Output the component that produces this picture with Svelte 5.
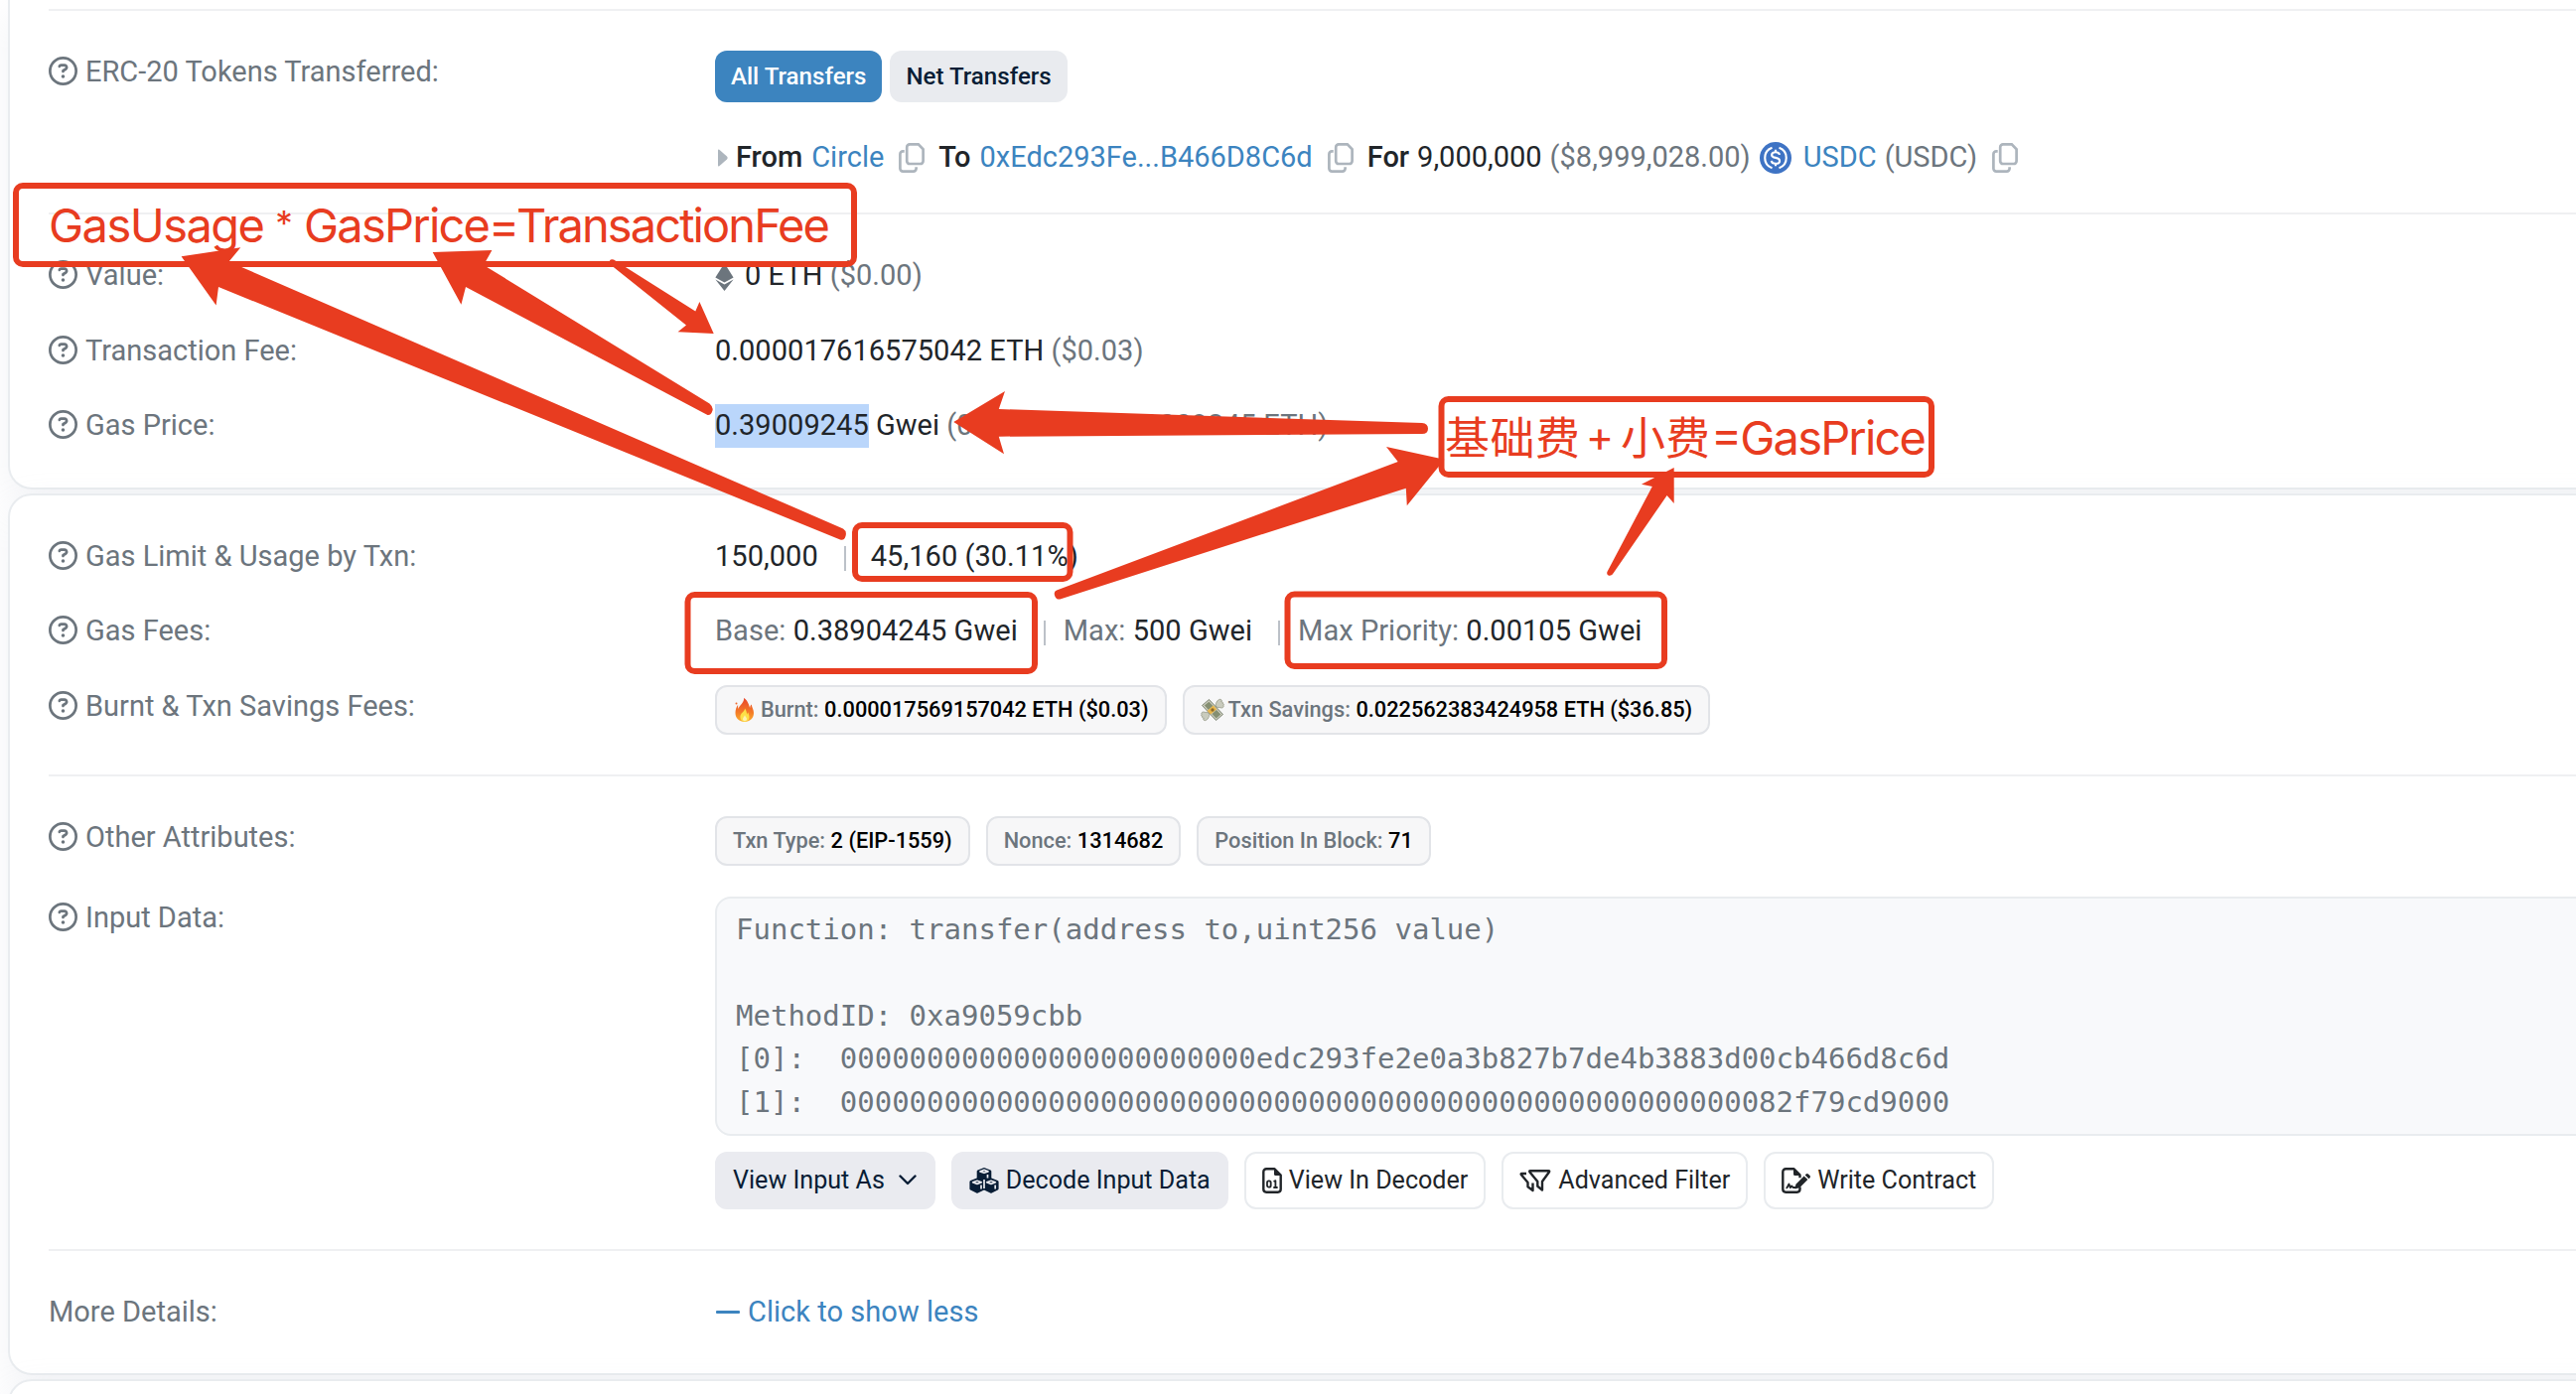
<script lang="ts">
	// Transaction details page with hand-drawn fee annotations on top.

	const otherBadges = [
		{ label: 'Txn Type:', value: '2 (EIP-1559)' },
		{ label: 'Nonce:', value: '1314682' },
		{ label: 'Position In Block:', value: '71' }
	];

	const inputData = [
		'Function: transfer(address to,uint256 value)',
		'',
		'MethodID: 0xa9059cbb',
		'[0]:  000000000000000000000000edc293fe2e0a3b827b7de4b3883d00cb466d8c6d',
		'[1]:  0000000000000000000000000000000000000000000000000000082f79cd9000'
	].join('\n');

	const boxes = [
		{ x: 16, y: 187, w: 844, h: 79 },
		{ x: 1451.5, y: 402, w: 493.5, h: 76 },
		{ x: 861, y: 529, w: 216.5, h: 54 },
		{ x: 692.5, y: 599, w: 349.5, h: 77 },
		{ x: 1296.5, y: 598.5, w: 379.5, h: 72.5 }
	];

	const arrows = [
		'M182.6 258.3 242.3 249.3 230.5 263.5 849 532.5Q853 535 851.5 540 850 545 846 543.5L220 289 217.6 307.5Z',
		'M435.7 254 495.4 252 487 267 714.5 406.5Q718.5 410 717.5 413.5 716 418.5 712.5 418L469 289 464.4 306.7Z',
		'M618 261.5 700.3 313.5 704.4 304 718.7 336 682.6 334.3 691 327.5 614 266Q612.5 260.5 618 261.5Z',
		'M960.3 425 1012 394 1005.8 412 1432 426Q1438 426.5 1438 431.7 1438 437 1432 437L1005.8 439.7 1011 457.3Z',
		'M1064 594.5 1407.7 465 1396 450 1454.5 462.7 1416.8 509.3 1415.8 491.7 1069 603Q1064 605 1062.3 600.5 1060.5 596 1064 594.5Z',
		'M1618.4 576 1663.8 490 1653 487.7 1685.7 471 1685.7 507 1678.6 499 1624.8 577Q1623 580.5 1620 579.7 1617.5 578.5 1618.4 576Z'
	];
</script>

{#snippet label(text: string)}
	<div class="label">
		<svg class="help" viewBox="0 0 512 512">
			<path
				d="M464 256A208 208 0 1 0 48 256a208 208 0 1 0 416 0zM0 256a256 256 0 1 1 512 0A256 256 0 1 1 0 256zm169.8-90.7c7.9-22.3 29.1-37.3 52.8-37.3h58.3c34.9 0 63.1 28.3 63.1 63.1c0 22.6-12.1 43.5-31.7 54.8L280 264.4c-.2 13-10.9 23.6-24 23.6c-13.3 0-24-10.7-24-24V250.5c0-8.6 4.6-16.5 12.1-20.8l44.3-25.4c4.7-2.7 7.6-7.7 7.6-13.1c0-8.4-6.8-15.1-15.1-15.1H222.6c-3.4 0-6.4 2.1-7.5 5.3l-.4 1.2c-4.4 12.5-18.2 19-30.7 14.6s-19-18.2-14.6-30.7zM224 352a32 32 0 1 1 64 0 32 32 0 1 1 -64 0z"
			/>
		</svg>
		<span>{text}</span>
	</div>
{/snippet}

{#snippet copy()}
	<svg class="copy" viewBox="0 0 26 30">
		<path d="M11 1.4h8.8l4.8 5v11.8a2.8 2.8 0 0 1-2.8 2.8H11a2.8 2.8 0 0 1-2.8-2.8V4.2A2.8 2.8 0 0 1 11 1.4z" />
		<path d="M5.7 8.4H4.2a2.8 2.8 0 0 0-2.8 2.8v14.6a2.8 2.8 0 0 0 2.8 2.8h10.6a2.8 2.8 0 0 0 2.8-2.8v-1.5" />
	</svg>
{/snippet}

<div class="page">
	<section class="card overview">
		<hr />
		<div class="row tokens">
			{@render label('ERC-20 Tokens Transferred:')}
			<div class="value">
				<div class="tabs">
					<button class="tab active">All Transfers</button>
					<button class="tab">Net Transfers</button>
				</div>
				<div class="transfer">
					<svg class="caret" viewBox="0 0 10 18"><path d="M0 1.5Q0 0 1.3 .8L9 7.5q1.3 1.5 0 3L1.3 17.2Q0 18 0 16.5z" /></svg>
					<b class="from">From</b>
					<a href="#circle">Circle</a>
					{@render copy()}
					<b class="to">To</b>
					<a href="#to">0xEdc293Fe...B466D8C6d</a>
					{@render copy()}
					<b class="for">For</b>
					<span class="amount">9,000,000</span>
					<span class="muted usd">($8,999,028.00)</span>
					<svg class="usdc" viewBox="0 0 32 32">
						<circle cx="16" cy="16" r="16" fill="#3e73c4" />
						<g fill="none" stroke="#fff" stroke-width="2.1">
							<path d="M12.5 5.8a10.8 10.8 0 0 0 0 20.4M19.5 5.8a10.8 10.8 0 0 1 0 20.4" />
							<path d="M20 12.9c-.3-2-1.9-2.7-4-2.7s-3.9.9-3.9 2.7c0 4.3 8 1.7 8 6 0 2-1.8 2.9-4.1 2.9s-4-.9-4.2-2.9M16 7.8v2.6M16 21.6v2.6" />
						</g>
					</svg>
					<a href="#usdc">USDC</a>
					<span class="muted symbol">(USDC)</span>
					{@render copy()}
				</div>
			</div>
		</div>
		<hr />
		<div class="row">
			{@render label('Value:')}
			<div class="value line">
				<svg class="eth" viewBox="0 0 19 28">
					<path d="M9.5 0 18.6 14.5 9.5 19.5.4 14.5z" />
					<path d="M.4 16.4 9.5 21.4 18.6 16.4 9.5 28z" />
				</svg>
				<span>0 ETH <span class="muted">($0.00)</span></span>
			</div>
		</div>
		<div class="row">
			{@render label('Transaction Fee:')}
			<div class="value line"><span>0.000017616575042 ETH <span class="muted">($0.03)</span></span></div>
		</div>
		<div class="row">
			{@render label('Gas Price:')}
			<div class="value line">
				<span><mark>0.39009245</mark> Gwei <span class="muted">(0.00000000039009245 ETH)</span></span>
			</div>
		</div>
	</section>

	<section class="card details">
		<div class="row">
			{@render label('Gas Limit & Usage by Txn:')}
			<div class="value line">
				<span>150,000</span>
				<i class="sep wide"></i>
				<span>45,160 (30.11%)</span>
			</div>
		</div>
		<div class="row">
			{@render label('Gas Fees:')}
			<div class="value line">
				<span><span class="muted">Base:</span> 0.38904245 Gwei</span>
				<i class="sep"></i>
				<span><span class="muted">Max:</span> 500 Gwei</span>
				<i class="sep"></i>
				<span><span class="muted">Max Priority:</span> 0.00105 Gwei</span>
			</div>
		</div>
		<div class="row">
			{@render label('Burnt & Txn Savings Fees:')}
			<div class="value badges">
				<span class="badge">
					<svg class="emoji" viewBox="0 0 24 24">
						<defs>
							<linearGradient id="flame" x1="0" y1="0" x2="0" y2="1">
								<stop offset="0" stop-color="#e8452c" />
								<stop offset=".6" stop-color="#f47b27" />
								<stop offset="1" stop-color="#fcae2e" />
							</linearGradient>
						</defs>
						<path fill="url(#flame)" d="M11 0c1 4-5 8-5.5 11C5 9.5 5 8 5.2 6.8 3.5 9 2.5 12 2.5 15c0 5.5 4 9 9.3 9s9.2-3.7 9.2-9c0-3.5-1.8-5-2.3-8.5-1 .8-1.5 2-1.5 3.5C15.5 5 14.5 2 11 0z" />
						<path fill="#fde047" d="M12 10.5c.3 3-4.6 4.5-4.6 8.6 0 3 2 4.7 4.5 4.7s4.6-1.7 4.6-4.5c0-2-.8-3-1-4.7-.8.6-1.2 1.3-1.3 2.2-.3-2.6-.8-4.8-2.2-6.3z" />
						<path fill="#fff3b0" d="M12 17c0 1.6-2 2.3-2 4.3 0 1.2.8 2 2 2s2-.8 2-2c0-1.8-1.6-2.5-2-4.3z" />
						<circle cx="3.5" cy="5.5" r="1" fill="#ef6a2c" />
					</svg>
					Burnt: <b>0.000017569157042 ETH ($0.03)</b>
				</span>
				<span class="badge">
					<svg class="emoji" viewBox="0 0 24 24">
						<path fill="#c9cbbd" stroke="#8f927f" stroke-width=".7" d="M15 9c0-5 3-8.500 5.500-7.500 1.200.6.800 1.700.2 2.200 1.500-.2 2 .9 1.500 1.700 1.200.1 1.500 1.400.8 2.200.6 1-.2 2.200-1.500 2.400zM9 15c0 5-3 8.500-5.500 7.500-1.200-.6-.8-1.700-.2-2.200-1.500.2-2-.9-1.500-1.700-1.200-.1-1.500-1.400-.8-2.200-.6-1 .2-2.200 1.500-2.400z" />
						<path fill="#c9cbbd" stroke="#67705a" stroke-width=".8" d="m8.500 1.500 14 15-7 6-14-15z" />
						<path fill="#858f72" d="m8.400 3.800 4 4.200-4.500 3.900-4-4.300zM16 12l4.300 4.500-4.600 3.900-4.200-4.500z" />
						<path fill="#e8b64b" d="m12.800 7.600 3.500 3.700-6.200 5.300-3.500-3.700z" />
						<circle cx="12" cy="12" r="1.7" fill="#8c6a2c" />
					</svg>
					Txn Savings: <b>0.022562383424958 ETH ($36.85)</b>
				</span>
			</div>
		</div>
		<hr />
		<div class="row">
			{@render label('Other Attributes:')}
			<div class="value badges">
				{#each otherBadges as badge}
					<span class="badge">{badge.label} <b>{badge.value}</b></span>
				{/each}
			</div>
		</div>
		<div class="row input">
			{@render label('Input Data:')}
			<div class="value">
				<pre>{inputData}</pre>
				<div class="actions">
					<button class="btn filled">
						View Input As
						<svg class="chevron" viewBox="0 0 18 11"><path d="m1.5 1.5 7.5 7.5 7.5-7.5" /></svg>
					</button>
					<button class="btn filled">
						<svg class="cubes" viewBox="0 0 30 26">
							<path fill="#081d35" d="m15 0 6.4 2.4q.9.4.9 1.3v6.9l6.3 2.4q1 .4 1 1.4v6.8q0 .9-.8 1.3l-6 3q-.8.4-1.6 0l-6.2-3-6.2 3q-.8.4-1.6 0l-6-3Q.4 22.1.4 21.2v-6.8q0-1 1-1.4l6.3-2.4V3.7q0-.9.9-1.3z" />
							<path fill="none" stroke="#eaebf0" stroke-width="1.7" d="M11 3.9 15 5.3l4-1.4-4-1.5zM3.6 14.8l4.4 1.6 4.3-1.6L8 13.3zM17.7 14.8l4.3 1.6 4.4-1.6-4.4-1.5zM18.5 10.4V6.9M12 21.6v-4M26.2 21.6v-4M15 12v9" />
						</svg>
						Decode Input Data
					</button>
					<button class="btn">
						<svg class="file" viewBox="0 0 20 26">
							<path d="M4.2 1.3h8.3l6.2 6.2v14.3a2.9 2.9 0 0 1-2.9 2.9H4.2a2.9 2.9 0 0 1-2.9-2.9V4.2a2.9 2.9 0 0 1 2.9-2.9z" />
							<path class="solid" d="M12 1l7 7h-5.5Q12 8 12 6.5z" />
							<rect class="thin" x="5" y="13.3" width="3.7" height="6.4" rx="1.7" />
							<path class="thin" d="M11.5 14l1.9-.8v6.8M11.3 20h4.3" />
						</svg>
						View In Decoder
					</button>
					<button class="btn">
						<svg class="filter" viewBox="0 0 32 24">
							<path d="M11 2.2h18.3q1.5 0 .6 1.3L23 13v8.5l-4.7-3.7V13L10.5 3.5Q9.7 2.2 11 2.2z" />
							<path d="M7 5H2.5Q1 5 2 6.3L8.5 14v4.3l5 3.7v-7.5" />
						</svg>
						Advanced Filter
					</button>
					<button class="btn">
						<svg class="contract" viewBox="0 0 29 26">
							<path d="M18.5 19.5v2.3a2.9 2.9 0 0 1-2.9 2.9H4.2a2.9 2.9 0 0 1-2.9-2.9V4.2a2.9 2.9 0 0 1 2.9-2.9h8.3l6 6v3" />
							<path class="solid" d="M12 1l7 7h-5.5Q12 8 12 6.5zM22.6 8.5l3.8 3.6-8.2 8.2-4.8 1.3 1-4.9zM23.7 7.4l1-1q1.2-1 2.3.1l1.5 1.4q1 1.2 0 2.3l-1 1z" />
							<path class="thin" d="M4.5 20.5q1.5 0 2.2-2.8l.8-1.2 1.3 3.6 1.4-1.7 1.3 1.6h2.5" />
						</svg>
						Write Contract
					</button>
				</div>
			</div>
		</div>
		<hr />
		<div class="row">
			<div class="label">More Details:</div>
			<div class="value line">
				<a class="less" href="#less"><i class="minus"></i>Click to show less</a>
			</div>
		</div>
	</section>

	<section class="card next"></section>

	<svg class="notes" viewBox="0 0 2594 1404">
		{#each boxes as b}
			<rect x={b.x} y={b.y} width={b.w} height={b.h} rx="7" />
		{/each}
		{#each arrows as d}
			<path {d} />
		{/each}
		<text x="49" y="244" textLength="218">GasUsage</text>
		<text class="star" x="286" y="238" text-anchor="middle">*</text>
		<text x="306" y="244" textLength="188">GasPrice</text>
		<text x="492" y="244" textLength="30">=</text>
		<text x="520" y="244" textLength="316">TransactionFee</text>
		<text class="cjk" x="1455" y="458" textLength="136">基础费</text>
		<text class="plus" x="1611" y="455" text-anchor="middle">+</text>
		<text class="cjk" x="1632" y="458" textLength="90">小费</text>
		<text x="1723" y="458" textLength="217">=GasPrice</text>
	</svg>
</div>

<style>
	:global(body) {
		margin: 0;
		background: #fff;
	}
	.page {
		position: relative;
		width: 100%;
		height: 1404px;
		overflow: hidden;
		box-sizing: border-box;
		padding-left: 8px;
		font: 400 29px/43.5px Roboto, 'Noto Sans CJK SC', sans-serif;
		color: #212529;
		white-space: nowrap;
	}
	.card {
		box-sizing: border-box;
		margin: 0 -60px 4px 0;
		padding: 39.5px 39px 40.5px;
		border: 2px solid #e9ecef;
		border-radius: 24px;
		background: #fff;
		box-shadow: 0 16px 38.4px rgba(189, 197, 209, 0.2);
	}
	.overview {
		height: 493px;
		padding-top: 9px;
		border-top: 0;
		border-radius: 0 0 24px 24px;
	}
	.details {
		height: 888px;
	}
	.next {
		height: 100px;
	}
	hr {
		height: 2px;
		margin: 0;
		border: 0;
		background: #eff0f2;
	}
	.row {
		display: grid;
		grid-template-columns: 671px 1fr;
	}
	.row + .row {
		margin-top: 32px;
	}
	.row + hr,
	hr + .row {
		margin-top: 40px;
	}
	.tokens.row {
		height: 129px;
	}
	.tokens + hr {
		margin-top: 34px;
	}
	.row.input {
		margin-top: 31px;
	}
	.label {
		display: flex;
		gap: 8px;
		height: 43.5px;
		color: #6c757d;
	}
	.help {
		width: 29px;
		height: 29px;
		margin-top: 6px;
		fill: #6c757d;
	}
	.muted {
		color: #6c757d;
	}
	a {
		color: #3c84bf;
		text-decoration: none;
	}
	b {
		font-weight: 500;
	}
	button {
		font: inherit;
	}
	.tabs {
		display: flex;
		gap: 8px;
	}
	.tab {
		height: 52px;
		padding: 1px 16px 0;
		border: 0;
		border-radius: 12px;
		background: #e9ebef;
		color: #081d35;
		font-size: 24.1px;
		font-weight: 500;
	}
	.tab.active {
		background: #3c84bf;
		color: #fff;
	}
	.transfer {
		display: flex;
		align-items: center;
		height: 43.5px;
		margin-top: 34px;
	}
	.caret {
		width: 10px;
		height: 18px;
		margin: 0 8px 0 3px;
		fill: #adb5bd;
	}
	.from {
		margin-right: 9px;
	}
	.to {
		margin-right: 9px;
	}
	.for {
		margin-right: 8px;
	}
	.copy {
		width: 26px;
		height: 30px;
		margin: 0 14px 0 15px;
		fill: none;
		stroke: #adb5bd;
		stroke-width: 2.7;
	}
	.usd {
		margin: 0 9px 0 8px;
	}
	.usdc {
		width: 32px;
		height: 32px;
		margin-right: 12px;
	}
	.symbol {
		margin-left: 8px;
	}
	.line {
		display: flex;
		height: 43.5px;
		letter-spacing: 0.04px;
	}
	.eth {
		width: 19px;
		height: 28px;
		margin: 9px 11px 0 0;
		fill: #6c757d;
	}
	mark {
		display: inline-block;
		height: 43.5px;
		background: #bad6fb;
		color: inherit;
	}
	.sep {
		width: 2px;
		height: 25px;
		margin: 11px 18px 0 26px;
		background: #bcc1c8;
	}
	.sep.wide {
		margin-right: 25px;
	}
	.badges {
		display: flex;
		gap: 16px;
	}
	.badge {
		display: flex;
		align-items: center;
		box-sizing: border-box;
		height: 50px;
		padding: 0 16px;
		border: 2px solid #e2e4e8;
		border-radius: 12px;
		background: #f7f7f8;
		color: #6c757d;
		font-size: 21.75px;
		font-weight: 500;
	}
	.badge b {
		margin-left: 5.5px;
		color: #000;
	}
	.emoji {
		width: 24px;
		height: 24px;
		margin-right: 4px;
	}
	pre {
		box-sizing: border-box;
		height: 241px;
		margin: 0;
		padding: 10px 18px 8px 19px;
		border: 2px solid #e9ecef;
		border-radius: 16px;
		background: #f8f9fb;
		color: #6c757d;
		font: 29px/43.5px 'DejaVu Sans Mono', monospace;
	}
	.actions {
		display: flex;
		gap: 16px;
		margin-top: 16px;
	}
	.btn {
		display: flex;
		align-items: center;
		box-sizing: border-box;
		height: 58px;
		padding: 0 16px;
		border: 2px solid #e9ecef;
		border-radius: 12px;
		background: #fff;
		color: #212529;
		font-size: 25.1px;
	}
	.btn.filled {
		border-color: #eaebf0;
		background: #eaebf0;
		color: #081d35;
	}
	.btn svg {
		flex: none;
		margin-right: 7px;
		fill: none;
		stroke: #212529;
		stroke-width: 2.4;
		stroke-linejoin: round;
	}
	.btn .solid {
		fill: #212529;
		stroke: none;
	}
	.btn .thin {
		stroke-width: 1.8;
	}
	.btn .chevron {
		width: 18px;
		height: 11px;
		margin: 0 1px 0 14px;
		stroke: #081d35;
		stroke-linecap: round;
	}
	.btn .cubes {
		width: 30px;
		height: 26px;
		stroke: none;
	}
	.file {
		width: 20px;
		height: 26px;
	}
	.filter {
		width: 32px;
		height: 24px;
	}
	.contract {
		width: 29px;
		height: 26px;
	}
	.less {
		display: flex;
		align-items: center;
	}
	.minus {
		width: 24px;
		height: 3px;
		margin: 0 8px 0 1px;
		border-radius: 1px;
		background: #3c84bf;
	}
	.notes {
		position: absolute;
		top: 0;
		left: 0;
		width: 2594px;
		height: 1404px;
		fill: #e83c20;
	}
	.notes rect {
		fill: none;
		stroke: #e83c20;
		stroke-width: 6;
	}
	.notes text {
		font: 400 47px Inter, sans-serif;
	}
	.notes .cjk {
		font: 400 45px 'Noto Sans CJK SC', sans-serif;
	}
	.notes .star {
		font-size: 35px;
	}
	.notes .plus {
		font-size: 43px;
	}
</style>
